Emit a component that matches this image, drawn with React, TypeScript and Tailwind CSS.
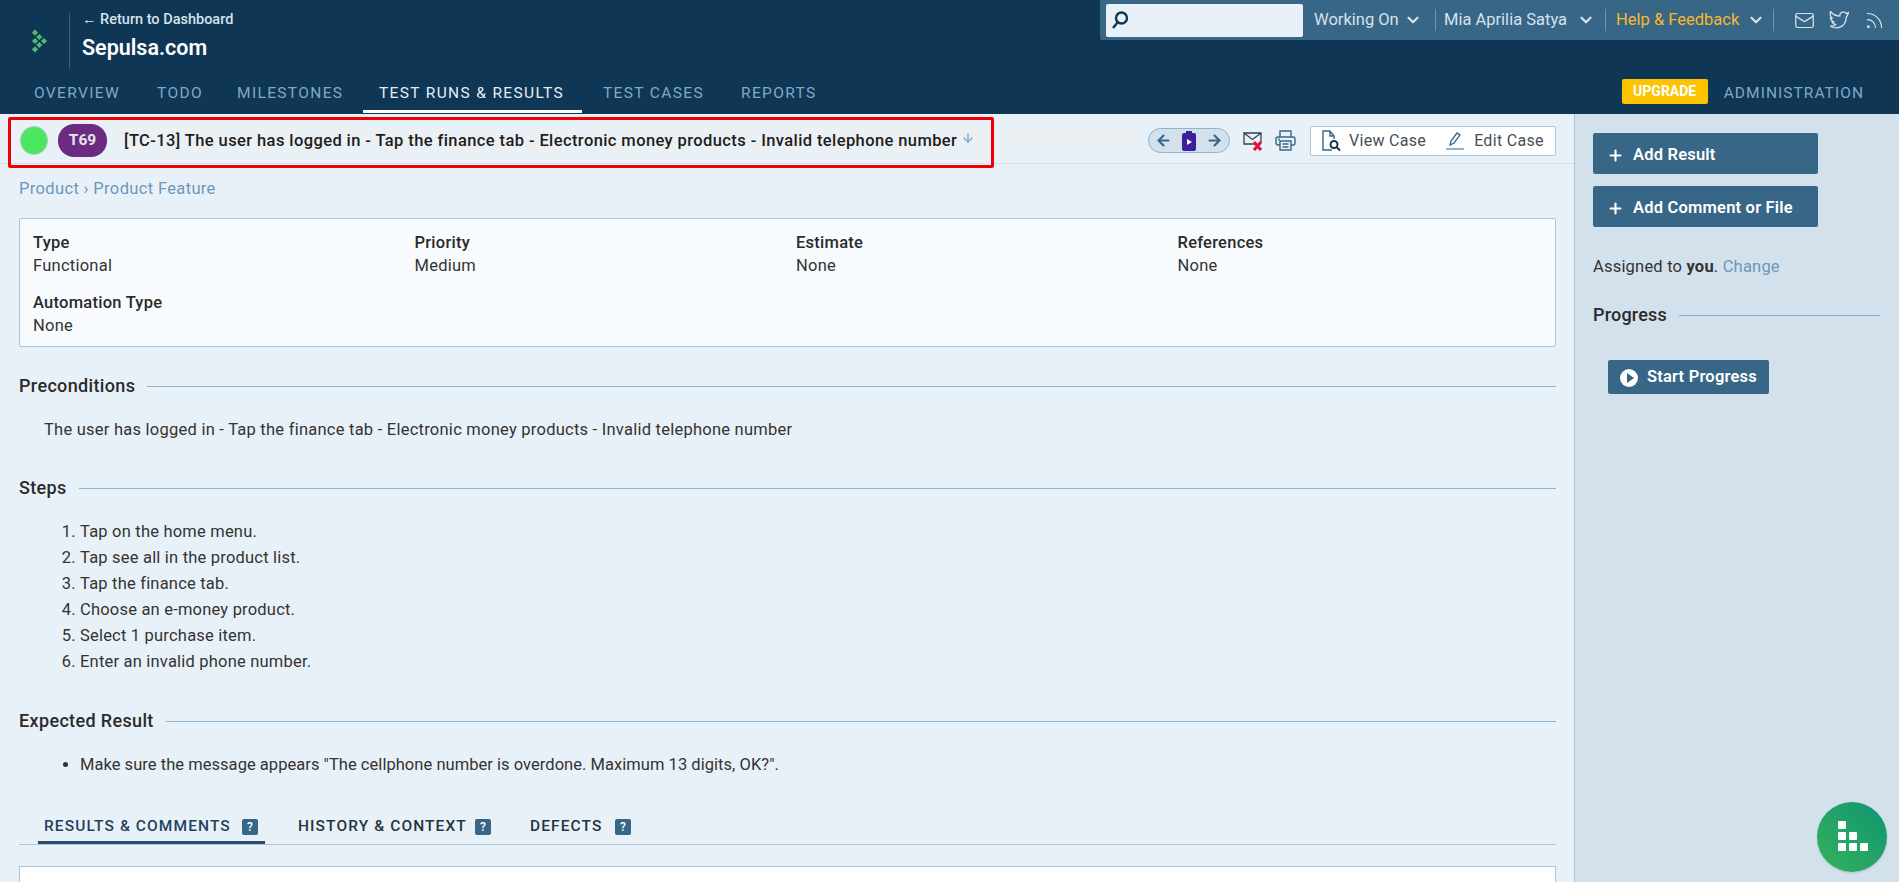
import { ChevronDown, Plus, Mail, Rss, ArrowLeft, ArrowRight, ArrowDown } from "lucide-react";

const fontStack = { fontFamily: "Roboto, 'Liberation Sans', sans-serif" };

function NavLink({ label, className }: { label: string; className: string }) {
  return (
    <div className={`h-[29px] pl-[16px] shrink-0 ${className}`}>
      <span className="block text-[15.5px] leading-[18px] tracking-[1.35px] whitespace-nowrap">{label}</span>
    </div>
  );
}

function Heading({ label }: { label: string }) {
  return (
    <div className="flex items-center gap-3">
      <h2 className="text-[18px] leading-5 font-medium tracking-[0.35px] text-[#2a2a2a] whitespace-nowrap">{label}</h2>
      <div className="flex-1 h-px bg-[#8fb4d2]" />
    </div>
  );
}

function Field({ label, value }: { label: string; value: string }) {
  return (
    <div className="h-[50px]">
      <div className="text-[16.5px] leading-[23px] font-medium tracking-[0.25px] text-[#2a2a2a]">{label}</div>
      <div className="text-[16.5px] leading-[23px] tracking-[0.25px] text-[#333]">{value}</div>
    </div>
  );
}

function TabHelp() {
  return <span className="w-4 h-4 rounded-[2px] bg-[#386687] text-white text-[12px] leading-4 text-center font-medium tracking-normal">?</span>;
}

function Logo() {
  const cells = [[3, 3.7], [7.3, 8], [12, 12], [3, 12], [7.3, 16], [3, 20.3]];
  return (
    <svg width="16" height="24" viewBox="0 0 16 24" fill="#52b874">
      {cells.map(([x, y]) => (
        <rect key={`${x}-${y}`} x={x - 2.2} y={y - 2.2} width="4.4" height="4.4" transform={`rotate(45 ${x} ${y})`} />
      ))}
    </svg>
  );
}

function TwitterBird() {
  return (
    <svg width="22" height="20" viewBox="0 0 22 20" fill="none" stroke="#d6e2ec" strokeWidth="1.3" strokeLinejoin="round">
      <path d="M20.5 2.5c-.8.5-1.6.8-2.4 1-.9-1.2-2.3-1.8-3.6-1.4-1.7.4-2.8 2-2.6 4-3.6 0-6.800-1.500-9.400-4.600-.8 2.800 0 5 1.800 6.500l-1.900-.4c.2 2.300 1.500 3.600 3.700 4.400H4c.7 1.600 2 2.400 3.800 2.500-1.500 1.200-3.300 1.800-5.300 1.700 7 3.800 15.500.5 15.700-9 .8-.8 1.500-1.800 2.300-4.700z" />
    </svg>
  );
}

export default function App() {
  const steps = [
    "Tap on the home menu.",
    "Tap see all in the product list.",
    "Tap the finance tab.",
    "Choose an e-money product.",
    "Select 1 purchase item.",
    "Enter an invalid phone number.",
  ];

  return (
    <div className="h-[882px] w-full overflow-hidden relative flex flex-col bg-[#e9f1f8]" style={fontStack}>
      {/* Header */}
      <header className="h-[114px] bg-[#0f3654] flex flex-col shrink-0">
        <div className="h-[84px] flex justify-between">
          <div className="flex pt-[13px]">
            <div className="w-[70px] h-[56px] flex items-center pl-[32px] border-r border-[#3b6280] mr-[12px]">
              <Logo />
            </div>
            <div>
              <div className="text-[14.5px] leading-[12px] mt-[1px] text-[#d6e2ec] font-medium whitespace-nowrap">← Return to Dashboard</div>
              <div className="text-[21.5px] leading-6 mt-[10px] text-white font-semibold">Sepulsa.com</div>
            </div>
          </div>
          <div className="w-[799px] h-[40px] bg-[#386687] flex items-center pl-[6px] text-[16.5px] text-[#d6e2ec] rounded-bl-[2px]">
            <div className="w-[197px] h-[33px] bg-[#e9f1f8] rounded-[2px] flex items-center pl-[5px] mr-[11px]">
              <svg width="18" height="20" viewBox="0 0 18 20" fill="none" stroke="#0f3654" strokeWidth="2.4">
                <circle cx="10.500" cy="8" r="5.500" />
                <path d="M6.500 12.500 2 18" />
              </svg>
            </div>
            <span className="w-[86px] whitespace-nowrap">Working On</span>
            <ChevronDown size={18} strokeWidth={3} className="ml-[4px] mr-[13px]" />
            <div className="w-px h-[22px] bg-[#6d93af] mr-[8px]" />
            <span className="w-[124px] whitespace-nowrap">Mia Aprilia Satya</span>
            <ChevronDown size={18} strokeWidth={3} className="ml-[9px] mr-[10px]" />
            <div className="w-px h-[22px] bg-[#6d93af] mr-[10px]" />
            <span className="w-[126px] whitespace-nowrap text-[#f5b82e]">Help &amp; Feedback</span>
            <ChevronDown size={18} strokeWidth={3} className="ml-[5px] mr-[8px]" />
            <div className="w-px h-[22px] bg-[#6d93af] mr-[20px]" />
            <Mail size={21} strokeWidth={1.4} className="mr-[13px]" />
            <TwitterBird />
            <Rss size={21} strokeWidth={1.4} className="ml-[14px]" />
          </div>
        </div>
        <div className="h-[30px] flex justify-between pl-[18px] pr-[35px]">
          <nav className="flex">
            <NavLink label="OVERVIEW" className="w-[123px] text-[#7fa9c9]" />
            <NavLink label="TODO" className="w-[80px] text-[#7fa9c9]" />
            <NavLink label="MILESTONES" className="w-[142px] text-[#7fa9c9]" />
            <NavLink label="TEST RUNS & RESULTS" className="w-[219px] mr-[5px] border-b-[3px] border-white text-[#e6eef5]" />
            <NavLink label="TEST CASES" className="w-[138px] text-[#7fa9c9]" />
            <NavLink label="REPORTS" className="w-[100px] text-[#7fa9c9]" />
          </nav>
          <div className="flex items-start">
            <span className="w-[86px] h-[25px] -mt-[5px] rounded-[2px] bg-[#fdc300] text-white text-[14px] leading-[25px] text-center font-bold">UPGRADE</span>
            <span className="ml-[16px] text-[15.5px] leading-[18px] tracking-[1.05px] text-[#7fa9c9]">ADMINISTRATION</span>
          </div>
        </div>
      </header>

      <div className="flex-1 flex min-h-0">
        {/* Main column */}
        <main className="flex-1 min-w-0">
          <div className="h-[50px] flex items-center border-b border-[#d3e1ec] pl-[20px] pr-[18px] pt-[4px]">
            <div className="w-[28px] h-[29px] rounded-full bg-[#4ce660] border border-[#a9cfc0] mr-[10px]" />
            <span className="w-[49px] h-[33px] rounded-[16px] bg-[#6a2b80] text-[#e9e3ef] text-[15.5px] leading-[33px] text-center font-bold mr-[11px]">T69</span>
            <div className="w-[1018px] h-[26px] flex items-center bg-[#ebf0f4] pl-[6px] pt-[1px]">
              <span className="text-[16.5px] font-medium tracking-[0.4px] text-[#1d1d1d] whitespace-nowrap">[TC-13] The user has logged in - Tap the finance tab - Electronic money products - Invalid telephone number</span>
              <ArrowDown size={14} strokeWidth={3} className="text-[#8fb4d2] ml-[4px] -mt-[6px]" />
            </div>
            <div className="ml-auto flex items-center">
              <div className="w-[82px] h-[25px] rounded-full border border-[#8fb4d2] bg-[#d2e1ec] flex items-center justify-between px-[6px] text-[#386687]">
                <ArrowLeft size={17} strokeWidth={3} />
                <svg width="14" height="20" viewBox="0 0 14 20">
                  <rect x="0" y="2" width="14" height="18" rx="2" fill="#3d1f9c" />
                  <rect x="4" y="0" width="6" height="3" fill="#3d1f9c" />
                  <path d="M5 8l5 3-5 3z" fill="#fff" />
                </svg>
                <ArrowRight size={17} strokeWidth={3} />
              </div>
              <svg className="ml-[13px]" width="21" height="22" viewBox="0 0 21 22" fill="none">
                <path d="M1 3h17v9M12 14H1V3l8.500 6.500L18 3" stroke="#33414e" strokeWidth="1.300" />
                <path d="m11 12 7 8m0-8-7 8" stroke="#e0103c" strokeWidth="3" />
              </svg>
              <svg className="ml-[11px]" width="21" height="21" viewBox="0 0 21 21" fill="none" stroke="#386687" strokeWidth="1.400">
                <path d="M5 7V1h11v6M5 15H3a2 2 0 0 1-2-2V9a2 2 0 0 1 2-2h15a2 2 0 0 1 2 2v4a2 2 0 0 1-2 2h-2" />
                <path d="M5 11h11v9H5zM7.500 14h6M7.500 17h6" />
                <rect x="3" y="8.500" width="2" height="2" fill="#27a567" stroke="none" />
              </svg>
              <div className="h-[30px] w-[246px] ml-[14px] bg-white border border-[#a9c6dc] rounded-[2px] flex items-center pl-[11px] text-[16px] text-[#44505a]">
                <svg width="20" height="22" viewBox="0 0 20 22" fill="none" stroke="#386687" strokeWidth="1.400">
                  <path d="M10 20H1V1h7l4 5v3M8 1v5h4" />
                  <circle cx="12" cy="14.500" r="3.500" strokeWidth="2" stroke="#0f3654" />
                  <path d="m15 17.500 3 3" strokeWidth="2" stroke="#0f3654" />
                </svg>
                <span className="ml-[7px] tracking-[0.3px] whitespace-nowrap">View Case</span>
                <svg className="ml-[20px]" width="18" height="20" viewBox="0 0 18 20" fill="none" stroke="#386687" strokeWidth="1.300">
                  <path d="m4 14 1-4 6-8 3 2-6 8z" />
                  <path d="M0 18h18" stroke="#8fb4d2" strokeWidth="2" />
                </svg>
                <span className="ml-[10px] tracking-[0.3px] whitespace-nowrap">Edit Case</span>
              </div>
            </div>
          </div>

          <div className="pl-[19px] pr-[18px]">
            <div className="h-[54px] text-[16.5px] tracking-[0.35px] leading-[50px] text-[#6c97bd]">Product › Product Feature</div>

            <div className="h-[129px] bg-[#f7fbfe] border border-[#a9c6dc] rounded-[2px] pl-[13px] pt-[12px] grid grid-cols-[repeat(4,381.5px)] auto-rows-[60px]">
              <Field label="Type" value="Functional" />
              <Field label="Priority" value="Medium" />
              <Field label="Estimate" value="None" />
              <Field label="References" value="None" />
              <Field label="Automation Type" value="None" />
            </div>

            <div className="mt-[29px]">
              <Heading label="Preconditions" />
              <p className="mt-[21px] ml-[25px] text-[16.5px] tracking-[0.24px] leading-[26px] text-[#333]">The user has logged in - Tap the finance tab - Electronic money products - Invalid telephone number</p>
            </div>

            <div className="mt-[35px]">
              <Heading label="Steps" />
              <ol className="mt-[21px] ml-[61px] list-decimal text-[16.5px] tracking-[0.2px] leading-[26px] text-[#333]">
                {steps.map((step) => (
                  <li key={step}>{step}</li>
                ))}
              </ol>
            </div>

            <div className="mt-[36px]">
              <Heading label="Expected Result" />
              <ul className="mt-[21px] ml-[61px] list-disc text-[16.5px] tracking-[0.04px] leading-[26px] text-[#333]">
                <li>Make sure the message appears "The cellphone number is overdone. Maximum 13 digits, OK?".</li>
              </ul>
            </div>

            <div className="mt-[34px] h-[33px] border-b border-[#a9c6dc] flex pl-[19px] text-[15.5px] font-medium tracking-[1.1px] text-[#24333f]">
              <div className="h-[32px] w-[227px] pl-[6px] pt-[1px] border-b-[3px] border-[#2b4d69] flex items-center gap-[10px]">
                <span className="w-[188px] whitespace-nowrap text-[#1f4160]">RESULTS &amp; COMMENTS</span>
                <TabHelp />
              </div>
              <div className="h-[32px] pb-[2px] flex items-center gap-[10px] ml-[33px]">
                <span className="w-[167px] whitespace-nowrap">HISTORY &amp; CONTEXT</span>
                <TabHelp />
              </div>
              <div className="h-[32px] pb-[2px] flex items-center gap-[10px] ml-[39px]">
                <span className="w-[75px] whitespace-nowrap">DEFECTS</span>
                <TabHelp />
              </div>
            </div>

            <div className="mt-[21px] h-[40px] bg-white border border-[#a9c6dc]" />
          </div>
        </main>

        {/* Sidebar */}
        <aside className="w-[325px] shrink-0 bg-[#d2e1ec] border-l border-[#a9c6dc] pl-[18px] pt-[19px]">
          <button className="w-[225px] h-[41px] rounded-[2px] bg-[#386687] text-white text-[16.5px] tracking-[0.2px] font-semibold flex items-center pl-[14px] pt-[3px] gap-[9px]">
            <Plus size={17} strokeWidth={3} /> Add Result
          </button>
          <button className="w-[225px] h-[41px] mt-[12px] rounded-[2px] bg-[#386687] text-white text-[16.5px] tracking-[0.2px] font-semibold flex items-center pl-[14px] pt-[3px] gap-[9px]">
            <Plus size={17} strokeWidth={3} /> Add Comment or File
          </button>
          <p className="mt-[27px] text-[16.5px] tracking-[0.2px] leading-[26px] text-[#333]">
            Assigned to <b>you</b>. <span className="text-[#6c97bd]">Change</span>
          </p>
          <div className="mt-[25px] w-[287px]">
            <div className="flex items-center gap-3">
              <h2 className="text-[18px] tracking-[0.2px] leading-5 font-medium text-[#2a2a2a]">Progress</h2>
              <div className="flex-1 h-px bg-[#7fb0d2]" />
            </div>
          </div>
          <button className="mt-[35px] ml-[15px] w-[161px] h-[34px] rounded-[2px] bg-[#386687] text-white text-[16.5px] tracking-[0.2px] font-semibold flex items-center pl-[12px] pt-[1px] gap-[9px]">
            <span className="w-[18px] h-[18px] rounded-full bg-white flex items-center justify-center">
              <span className="w-0 h-0 ml-[2px] border-y-[5px] border-y-transparent border-l-[7px] border-l-[#386687]" />
            </span>
            Start Progress
          </button>
        </aside>
      </div>

      {/* Annotation box */}
      <div className="absolute left-[8px] top-[117px] w-[986px] h-[51px] border-[3px] border-[#f00000] rounded-[2px]" />

      {/* Floating help button */}
      <div className="absolute left-[1817px] top-[802px] w-[70px] h-[70px] rounded-full bg-gradient-to-tr from-[#34b25c] to-[#0c9570] grid grid-cols-[8px_8px_8px] grid-rows-[8px_8px_8px] gap-[3px] pl-[21px] pt-[19px] shadow-sm">
        <span className="bg-white rounded-[1px] col-start-1 row-start-1" />
        <span className="bg-white rounded-[1px] col-start-1 row-start-2" />
        <span className="bg-white rounded-[1px] col-start-2 row-start-2" />
        <span className="bg-white rounded-[1px] col-start-1 row-start-3" />
        <span className="bg-white rounded-[1px] col-start-2 row-start-3" />
        <span className="bg-white rounded-[1px] col-start-3 row-start-3" />
      </div>
    </div>
  );
}
